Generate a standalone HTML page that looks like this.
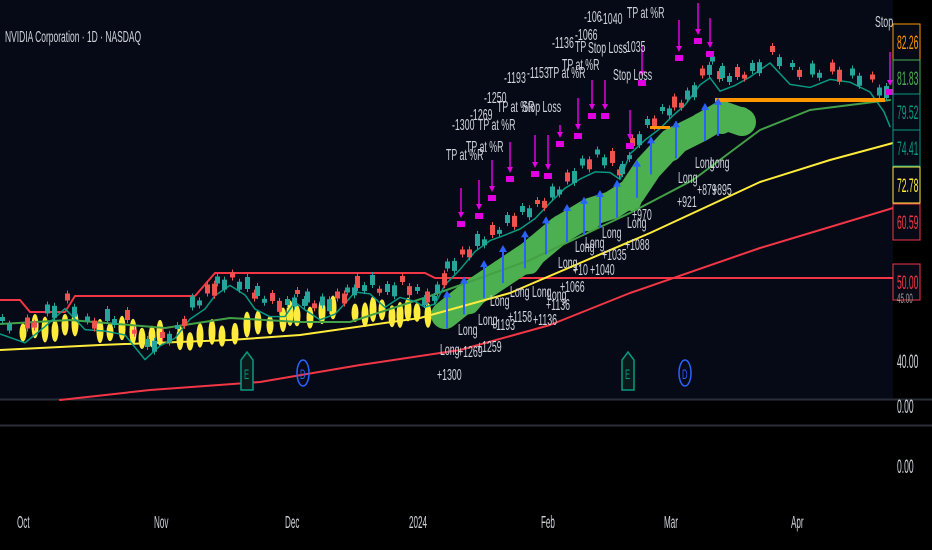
<!DOCTYPE html>
<html><head><meta charset="utf-8"><style>
html,body{margin:0;padding:0;background:#000;width:932px;height:550px;overflow:hidden}
svg text{font-family:"Liberation Sans Narrow","Liberation Sans",sans-serif}
</style></head><body>
<svg id="s" width="932" height="550" xmlns="http://www.w3.org/2000/svg">
<rect x="0" y="0" width="932" height="550" fill="#000"/>
<rect x="0" y="0" width="893" height="399" fill="#050a16"/>
<line x1="0" y1="399.5" x2="932" y2="399.5" stroke="#2a2e39" stroke-width="2"/>
<line x1="0" y1="425.5" x2="932" y2="425.5" stroke="#2a2e39" stroke-width="2"/>
<g id="g"></g>
<text x="5" y="42" fill="#d1d4dc" font-size="16" transform="translate(5,42) scale(0.53,1) translate(-5,-42)">NVIDIA Corporation · 1D · NASDAQ</text>
</svg>
<script>
var g=document.getElementById('g');var NS='http://www.w3.org/2000/svg';
function el(t,a,txt){var e=document.createElementNS(NS,t);for(var k in a)e.setAttribute(k,a[k]);if(txt!==undefined)e.textContent=txt;g.appendChild(e);return e;}
function pl(pts,c,w,extra){var a={points:pts.map(function(p){return p.join(',')}).join(' '),fill:'none',stroke:c,'stroke-width':w,'stroke-linejoin':'round','stroke-linecap':'round'};for(var k in extra)a[k]=extra[k];return el('polyline',a);}
function interp(pts,x){for(var i=0;i<pts.length-1;i++){if(x>=pts[i][0]&&x<=pts[i+1][0]){var t=(x-pts[i][0])/(pts[i+1][0]-pts[i][0]);return pts[i][1]+t*(pts[i+1][1]-pts[i][1]);}}return pts[pts.length-1][1];}
function txt(x,y,s,c,fs,sc){sc=sc||0.55;var e=el('text',{x:x,y:y,fill:c||'#d1d4dc','font-size':fs||16,transform:'translate('+x+','+y+') scale('+sc+',1) translate('+(-x)+','+(-y)+')'},s);return e;}
var redTop=[[0,300],[20,300],[30,312],[65,312],[75,296],[195,296],[215,273],[425,273],[435,278],[893,278]];
var green=[[0,324],[70,320],[165,328],[230,318],[300,322],[350,322],[430,296],[530,260],[630,213],[693,180],[760,130],[810,110],[890,100]];
var yellow=[[0,350],[100,345],[230,340],[300,335],[420,318],[510,293],[650,233],[760,182],[830,160],[893,143]];
var redLow=[[60,400],[150,390],[260,382],[360,365],[460,350],[550,325],[630,293],[760,248],[893,208]];
var price=[[0,322],[25,326],[45,312],[65,300],[85,322],[105,318],[125,318],[145,346],[160,338],[175,330],[190,305],[205,292],[215,283],[230,278],[245,286],[255,294],[270,300],[285,305],[295,295],[305,300],[320,304],[335,298],[345,293],[355,285],[370,283],[385,291],[400,282],[415,292],[425,300],[435,292],[445,268],[460,255],[475,243],[490,233],[505,222],[520,212],[535,205],[550,195],[565,180],[580,165],[595,155],[610,160],[620,172],[630,145],[645,125],[660,112],[672,105],[685,98],[700,75],[710,62],[720,75],[735,75],[750,70],[770,52],[790,68],[810,72],[830,70],[850,75],[870,80],[884,95],[890,112]];
pl(redTop,'#f23645',2);
pl(redLow,'#f23645',2);
var ex=[23,35,45,55,65,75,100,110,122,133,142,152,160,180,190,200,212,222,235,247,258,270,283,290,297,310,322,333,355,365,373,382,392,400,408,417,428];
ex.forEach(function(x,i){var yc=interp(yellow,x)-12-8*Math.sin(x/40)-4*Math.sin(i*1.7);var h=18+8*Math.abs(Math.sin(i*0.9));el('ellipse',{cx:x,cy:yc,rx:3.5,ry:h/2,fill:'#ffeb3b'});});
var blob=[[445,315],[470,295],[500,275],[530,255],[560,230],[590,212],[612,205],[632,192],[648,168],[672,142],[700,128],[722,115],[742,122]];
pl(blob,'#4caf50',28);
pl(blob.map(function(p,i){return [p[0],p[1]+(i%2?10:-6)]}),'#4caf50',18);
pl(green,'#43a047',2);
pl(yellow,'#ffeb3b',2);
var teal=price.map(function(p,i){return [p[0],p[1]+12+5*Math.sin(i*1.3)];});
pl(teal,'#089981',1.5);
for(var i=0;i<price.length;i++){var p=price[i];for(var k=0;k<2;k++){var x=p[0]+k*7;if(x>889)continue;var y=interp(price,x)+(k?4:-3);var up=((i*3+k)%5)<3;var h=4+((i*7+k*3)%9);var c=up?'#26a69a':'#ef5350';el('line',{x1:x+2.5,y1:y-h/2-3,x2:x+2.5,y2:y+h/2+3,stroke:c,'stroke-width':1});el('rect',{x:x,y:y-h/2,width:5,height:h,fill:c});}}
el('rect',{x:715,y:98,width:170,height:4,fill:'#ff9800'});
el('rect',{x:650,y:126,width:20,height:3,fill:'#ff9800'});
var bx=[447,464,484,503,525,546,567,584,600,617,637,651,676,705,718];
bx.forEach(function(x){var yb=interp([[445,330],[500,285],[560,245],[600,228],[630,210],[650,175],[700,143],[745,125]],x);var yt=yb-38;el('line',{x1:x,y1:yb,x2:x,y2:yt+5,stroke:'#2962ff','stroke-width':2});el('polygon',{points:(x-4)+','+(yt+7)+' '+(x+4)+','+(yt+7)+' '+x+','+yt,fill:'#2962ff'});});
var mx=[[461,188,218],[479,180,210],[492,160,192],[510,142,173],[535,135,168],[548,135,170],[560,125,138],[578,98,130],[592,80,110],[605,80,110],[630,110,140],[642,45,77],[679,20,52],[698,3,35],[710,18,48],[890,52,86]];
mx.forEach(function(m){var x=m[0];el('line',{x1:x,y1:m[1],x2:x,y2:m[2]-5,stroke:'#e000e0','stroke-width':1.5});el('polygon',{points:(x-3)+','+(m[2]-6)+' '+(x+3)+','+(m[2]-6)+' '+x+','+m[2],fill:'#e000e0'});el('rect',{x:x-4,y:m[2]+3,width:8,height:6,fill:'#e000e0'});});
var L=[[440,355,'Long'],[437,380,'+1300'],[458,335,'Long'],[458,357,'+1269'],[478,325,'Long'],[477,352,'+1259'],[490,306,'Long'],[491,330,'+1193'],[510,297,'Long'],[508,322,'+1158'],[532,297,'Long'],[533,325,'+1136'],[547,300,'Long'],[546,310,'+1136'],[558,268,'Long'],[560,292,'+1066'],[575,252,'Long'],[585,248,'Long'],[573,275,'+10'],[590,275,'+1040'],[602,238,'Long'],[602,260,'+1035'],[627,228,'Long'],[625,250,'+1088'],[632,220,'+970'],[678,183,'Long'],[677,207,'+921'],[695,168,'Long'],[710,168,'Long'],[697,195,'+879'],[712,195,'+895'],
[446,160,'TP at %R'],[466,152,'TP at %R'],[452,130,'-1300'],[470,120,'-1269'],[478,130,'TP at %R'],[484,103,'-1250'],[497,112,'TP at %R'],[522,112,'Stop Loss'],[504,83,'-1193'],[527,78,'-1153'],[548,78,'TP at %R'],[562,70,'TP at %R'],[552,48,'-1136'],[575,40,'-1066'],[575,52,'TP'],[588,53,'Stop Loss'],[623,52,'-1035'],[584,22,'-106'],[600,24,'-1040'],[627,18,'TP at %R'],[613,80,'Stop Loss'],[875,27,'Stop']];
L.forEach(function(l){txt(l[0],l[1],l[2],'#d1d4dc',16,0.55);});
[247,628].forEach(function(x){el('path',{d:'M'+(x-6)+',390 L'+(x-6)+',360 L'+x+',352 L'+(x+6)+',360 L'+(x+6)+',390 Z',fill:'#0a1a1a',stroke:'#089981','stroke-width':1.5});txt(x-3,379,'E','#089981',14);});
[303,685].forEach(function(x){el('ellipse',{cx:x,cy:373,rx:6,ry:13,fill:'none',stroke:'#2962ff','stroke-width':1.5});txt(x-3,379,'D','#2962ff',14);});
var ax=[[42,'82.26','#ff9800'],[78,'81.83','#4caf50'],[112,'79.52','#089981'],[148,'74.41','#089981'],[185,'72.78','#ffeb3b'],[222,'60.59','#f23645'],[282,'50.00','#f23645']];
ax.forEach(function(a){el('rect',{x:893,y:a[0]-18,width:27,height:36,fill:'#050a16',stroke:a[2],'stroke-width':1});txt(897,a[0]+7,a[1],a[2],19,0.45);});
txt(897,368,'40.00','#d1d4dc',19,0.45);txt(897,413,'0.00','#d1d4dc',19,0.45);txt(897,473,'0.00','#d1d4dc',19,0.45);txt(897,303,'45.00','#999',14,0.45);
[[17,'Oct'],[154,'Nov'],[285,'Dec'],[409,'2024'],[541,'Feb'],[664,'Mar'],[791,'Apr']].forEach(function(d){txt(d[0],528,d[1],'#d1d4dc',18,0.45);});
</script>
</body></html>
